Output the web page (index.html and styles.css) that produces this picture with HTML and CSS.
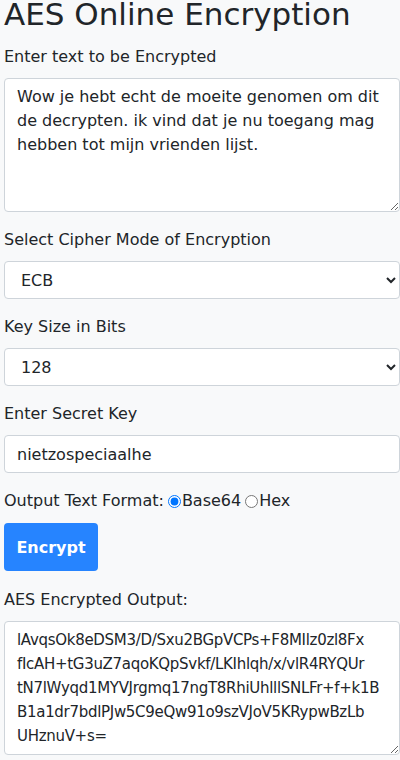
FILE: index.html
```html
<!DOCTYPE html>
<html lang="en">
<head>
<meta charset="utf-8">
<title>AES Online Encryption</title>
<link rel="stylesheet" href="styles.css">
</head>
<body>
<main class="page">
  <h1 class="title">AES Online Encryption</h1>
  <div class="group">
    <label class="label" for="plain">Enter text to be Encrypted</label>
    <textarea id="plain" class="field area">Wow je hebt echt de moeite genomen om dit de decrypten. ik vind dat je nu toegang mag hebben tot mijn vrienden lijst.</textarea>
  </div>
  <div class="group">
    <label class="label" for="mode">Select Cipher Mode of Encryption</label>
    <select id="mode" class="field select">
      <option>ECB</option>
      <option>CBC</option>
    </select>
  </div>
  <div class="group">
    <label class="label" for="size">Key Size in Bits</label>
    <select id="size" class="field select">
      <option>128</option>
      <option>192</option>
      <option>256</option>
    </select>
  </div>
  <div class="group">
    <label class="label" for="key">Enter Secret Key</label>
    <input id="key" class="field input" type="text" value="nietzospeciaalhe">
  </div>
  <div class="format">Output Text Format:<input class="radio" type="radio" name="fmt" checked>Base64<input class="radio" type="radio" name="fmt">Hex</div>
  <button class="btn" type="button">Encrypt</button>
  <div class="group">
    <label class="label" for="out">AES Encrypted Output:</label>
    <textarea id="out" class="field area out">lAvqsOk8eDSM3/D/Sxu2BGpVCPs+F8MIlz0zl8Fx
fIcAH+tG3uZ7aqoKQpSvkf/LKIhlqh/x/vlR4RYQUr
tN7lWyqd1MYVJrgmq17ngT8RhiUhlllSNLFr+f+k1B
B1a1dr7bdlPJw5C9eQw91o9szVJoV5KRypwBzLb
UHznuV+s=</textarea>
  </div>
</main>
</body>
</html>
```
FILE: styles.css
```css
* { box-sizing: border-box; }
html, body {
  margin: 0;
  padding: 0;
  background: #f8f9fa;
  overflow: hidden;
}
body {
  font-family: "DejaVu Sans", "Noto Sans", sans-serif;
  font-size: 16px;
  color: #212529;
}
.page {
  padding: 0 0 0 4px;
  width: 400px;
}
.title {
  margin: 0 0 16px;
  font-size: 31px;
  font-weight: 400;
  line-height: 29px;
  color: #212529;
  white-space: nowrap;
}
.group {
  margin-bottom: 16px;
}
.label {
  display: block;
  line-height: 24px;
  margin-bottom: 9px;
  color: #212529;
}
.field {
  display: block;
  width: 396px;
  font-family: inherit;
  font-size: 16px;
  line-height: 24px;
  color: #212529;
  background: #fff;
  border: 1px solid #ced4da;
  border-radius: 4px;
  margin: 0;
}
.area {
  height: 134px;
  padding: 6px 12px;
  resize: vertical;
  overflow: hidden;
}
.out {
  white-space: pre-wrap;
  font-size: 15px;
  letter-spacing: -0.3px;
}
.select {
  height: 38px;
  padding: 6px 12px;
}
.input {
  height: 38px;
  padding: 6px 12px;
}
.format {
  line-height: 24px;
  height: 24px;
  display: flex;
  align-items: center;
}
.radio {
  margin: 0 1px 0 4px;
  width: 13px;
  height: 13px;
}
.btn {
  display: block;
  margin: 10px 0 17px;
  width: 94px;
  height: 48px;
  border: none;
  border-radius: 4px;
  background: #2684ff;
  color: #fff;
  font-family: inherit;
  font-size: 16px;
  font-weight: 700;
  padding: 0;
}
```
